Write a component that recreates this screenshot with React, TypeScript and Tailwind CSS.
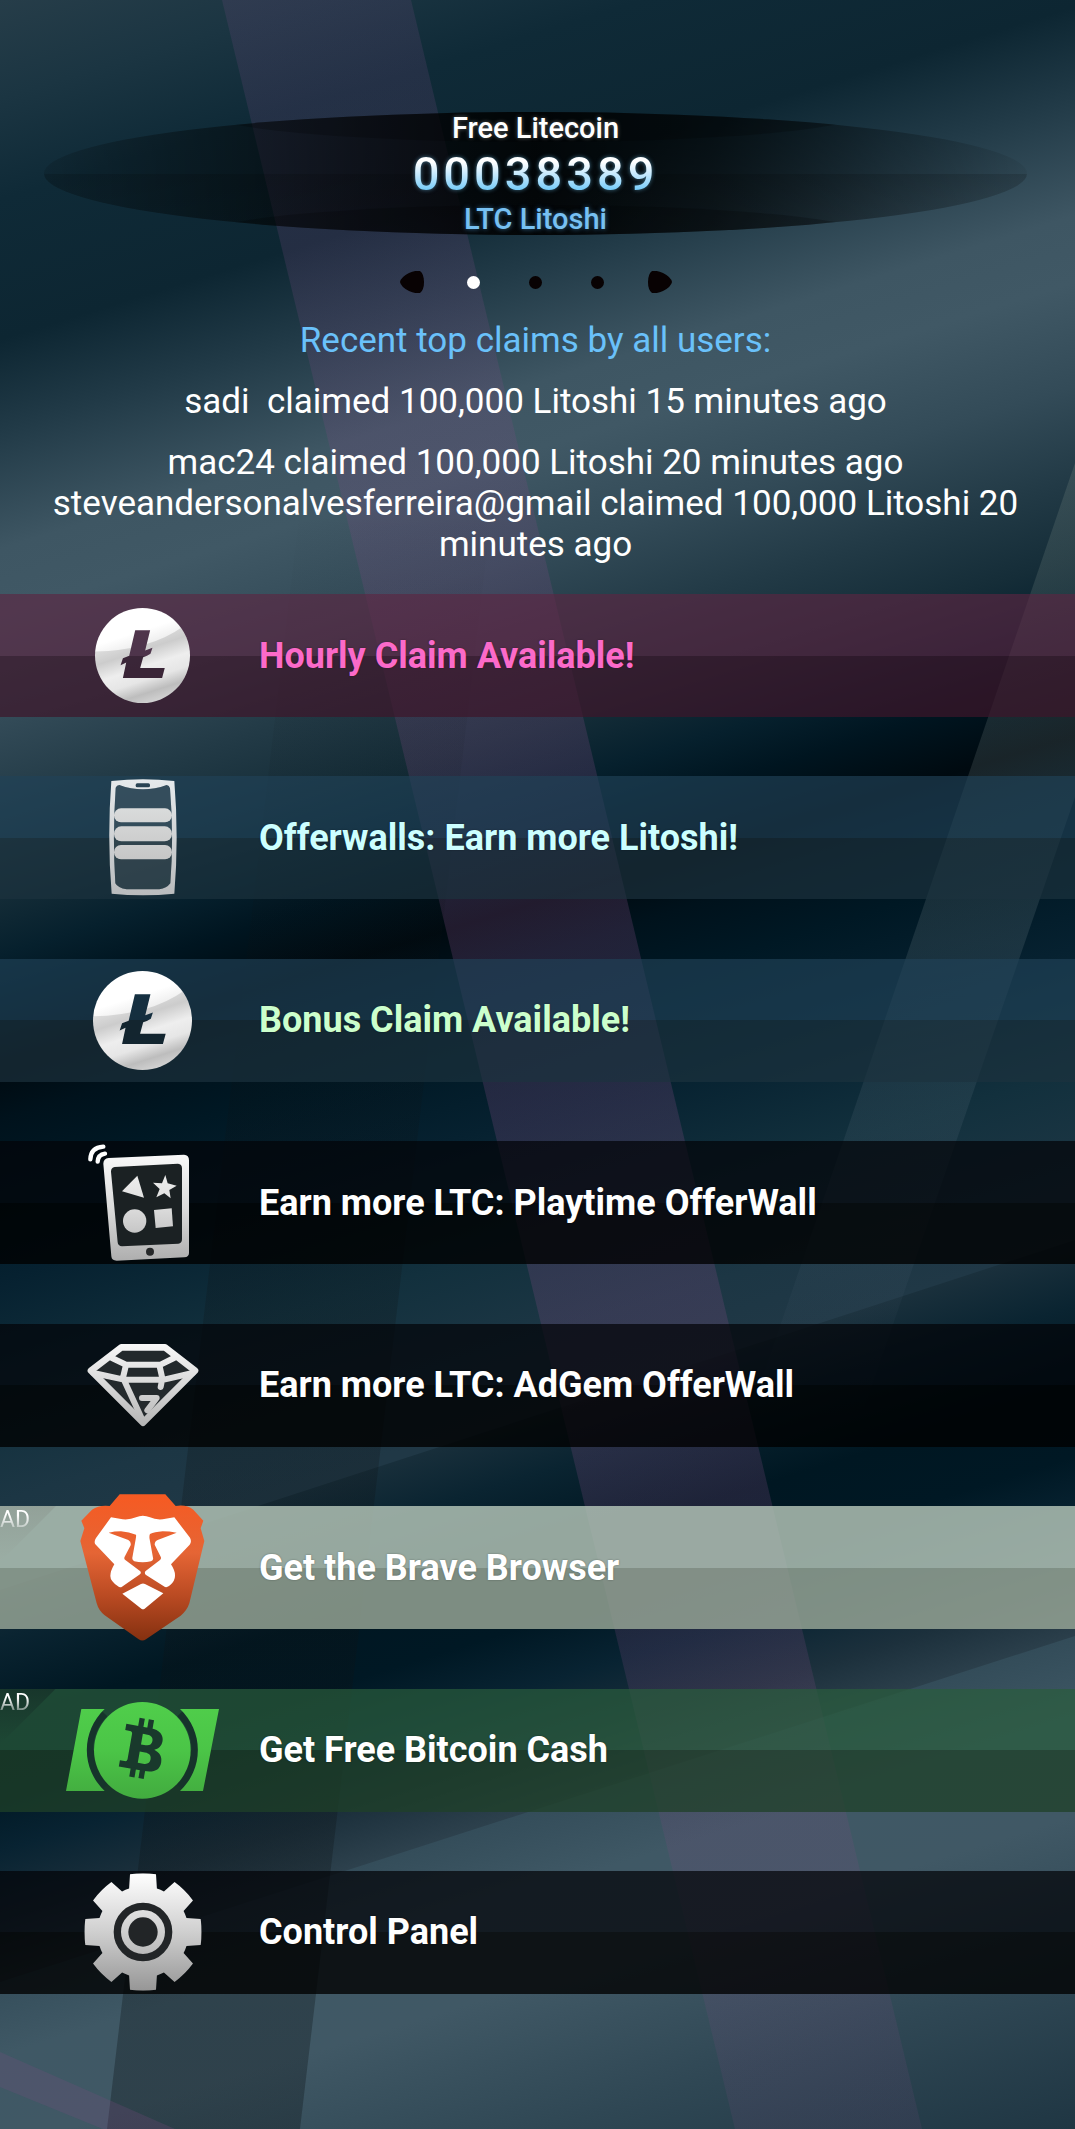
import React from "react";

function Backdrop() {
  return (
    <svg
      className="absolute inset-0 h-full w-full"
      viewBox="0 0 1075 2129"
      preserveAspectRatio="none"
      aria-hidden="true"
    >
      <defs>
        <linearGradient id="sky" gradientUnits="userSpaceOnUse" x1="0" y1="0" x2="696" y2="2246">
          <stop offset="0" stopColor="#263d49" />
          <stop offset="0.04" stopColor="#1b3542" />
          <stop offset="0.081" stopColor="#0f2a37" />
          <stop offset="0.138" stopColor="#0d2632" />
          <stop offset="0.175" stopColor="#213a47" />
          <stop offset="0.223" stopColor="#3e5663" />
          <stop offset="0.25" stopColor="#405865" />
          <stop offset="0.292" stopColor="#334b58" />
          <stop offset="0.33" stopColor="#223a46" />
          <stop offset="0.362" stopColor="#152d38" />
          <stop offset="0.388" stopColor="#06202d" />
          <stop offset="0.408" stopColor="#001520" />
          <stop offset="0.434" stopColor="#000a10" />
          <stop offset="0.455" stopColor="#00121c" />
          <stop offset="0.48" stopColor="#001824" />
          <stop offset="0.52" stopColor="#062130" />
          <stop offset="0.57" stopColor="#12303d" />
          <stop offset="0.61" stopColor="#1c3644" />
          <stop offset="0.64" stopColor="#203846" />
        </linearGradient>
        <linearGradient id="mid" gradientUnits="userSpaceOnUse" x1="0" y1="0" x2="696" y2="2246">
          <stop offset="0.64" stopColor="#1a303c" />
          <stop offset="0.666" stopColor="#0a2431" />
          <stop offset="0.699" stopColor="#001722" />
          <stop offset="0.727" stopColor="#001824" />
          <stop offset="0.752" stopColor="#082332" />
          <stop offset="0.78" stopColor="#1c303c" />
          <stop offset="0.803" stopColor="#2d414d" />
        </linearGradient>
        <linearGradient id="low" gradientUnits="userSpaceOnUse" x1="0" y1="0" x2="696" y2="2246">
          <stop offset="0.8" stopColor="#334c59" />
          <stop offset="0.835" stopColor="#3f5865" />
          <stop offset="0.873" stopColor="#405865" />
          <stop offset="0.934" stopColor="#2f4754" />
          <stop offset="1" stopColor="#1f3643" />
        </linearGradient>
        <linearGradient id="violetFade" gradientUnits="userSpaceOnUse" x1="0" y1="0" x2="0" y2="2129">
          <stop offset="0" stopColor="#744a80" stopOpacity="0.2" />
          <stop offset="0.4" stopColor="#7d4a80" stopOpacity="0.27" />
          <stop offset="0.65" stopColor="#7d4a80" stopOpacity="0.26" />
          <stop offset="1" stopColor="#7d4a80" stopOpacity="0.14" />
        </linearGradient>
        <linearGradient id="beamFade" gradientUnits="userSpaceOnUse" x1="0" y1="463" x2="0" y2="1420">
          <stop offset="0" stopColor="#8a9a8f" stopOpacity="0.2" />
          <stop offset="0.5" stopColor="#8a9a9f" stopOpacity="0.17" />
          <stop offset="0.8" stopColor="#7a8a9f" stopOpacity="0.08" />
          <stop offset="1" stopColor="#7a8a9f" stopOpacity="0" />
        </linearGradient>
        <linearGradient id="shadeFade" gradientUnits="userSpaceOnUse" x1="0" y1="500" x2="0" y2="2129">
          <stop offset="0" stopColor="#0c1012" stopOpacity="0" />
          <stop offset="0.5" stopColor="#0c1012" stopOpacity="0.22" />
          <stop offset="1" stopColor="#0c1418" stopOpacity="0.34" />
        </linearGradient>
      </defs>
      <rect width="1075" height="2129" fill="url(#sky)" />
      <path d="M1075 1240L0 1590V2129H1075Z" fill="url(#mid)" />
      <path d="M1075 1636L0 1982V2129H1075Z" fill="url(#low)" />
      <path d="M222 0H411L922 2129H735Z" fill="url(#violetFade)" />
      <path d="M1075 463V797L860 1420H748Z" fill="url(#beamFade)" />
      <path d="M301 500H493L300 2129H107Z" fill="url(#shadeFade)" />
      <path d="M0 2052L175 2129H103L0 2087Z" fill="#7d4a80" fillOpacity="0.24" />
    </svg>
  );
}

function CoinIcon({ id, className }: { id: string; className: string }) {
  return (
    <svg className={className} viewBox="285 53 286 286" aria-hidden="true">
      <defs>
        <linearGradient id={id + "-body"} gradientUnits="userSpaceOnUse" x1="395" y1="150" x2="455" y2="335">
          <stop offset="0" stopColor="#dcdcdc" />
          <stop offset="0.2" stopColor="#cccccc" />
          <stop offset="0.45" stopColor="#eeeeee" />
          <stop offset="0.65" stopColor="#e6e6e6" />
          <stop offset="0.85" stopColor="#bdbdbd" />
          <stop offset="1" stopColor="#d0d0d0" />
        </linearGradient>
        <linearGradient id={id + "-shine"} gradientUnits="userSpaceOnUse" x1="400" y1="60" x2="440" y2="185">
          <stop offset="0.5" stopColor="#ffffff" />
          <stop offset="1" stopColor="#e6e6e6" />
        </linearGradient>
        <mask id={id + "-mask"}>
          <circle cx="428" cy="196" r="143" fill="#fff" />
          <path
            d="M406 120H451L436 181L458 173L452 191Q442 198 430 201L421 234H495L487 264H369L379 217L362 225L369 204L388 197Z"
            fill="#000"
          />
        </mask>
      </defs>
      <g mask={"url(#" + id + "-mask)"}>
        <rect x="285" y="53" width="286" height="286" fill={"url(#" + id + "-body)"} />
        <path d="M285 184Q450 180 548 110L571 53H285Z" fill={"url(#" + id + "-shine)"} />
      </g>
    </svg>
  );
}

function PhoneIcon() {
  return (
    <svg className="h-[117px] w-[68px] shrink-0" viewBox="327 569 204 351" aria-hidden="true">
      <defs>
        <linearGradient id="phone" x1="0" y1="0" x2="0" y2="1">
          <stop offset="0" stopColor="#e6eaec" />
          <stop offset="1" stopColor="#b9bbbd" />
        </linearGradient>
        <linearGradient id="phoneBars" gradientUnits="userSpaceOnUse" x1="0" y1="650" x2="0" y2="815">
          <stop offset="0" stopColor="#dadcdc" />
          <stop offset="1" stopColor="#c6c6c6" />
        </linearGradient>
      </defs>
      <path
        fillRule="evenodd"
        fill="url(#phone)"
        d="M334 575Q429 564 523 575Q537 745 523 913Q429 923 335 913Q321 745 334 575ZM347 595Q350 587 358 587Q429 613 500 587Q508 588 510 597Q522 740 511 882Q500 897 478 900H380Q353 896 346 882Q337 740 347 595Z"
      />
      <path
        fill="#8a8f92"
        fillOpacity="0.2"
        d="M347 595Q350 587 358 587Q429 613 500 587Q508 588 510 597Q522 740 511 882Q500 897 478 900H380Q353 896 346 882Q337 740 347 595Z"
      />
      <rect x="407" y="582" width="43" height="12" rx="5" fill="#2a4454" />
      <rect x="342" y="657" width="174" height="42" rx="21" fill="url(#phoneBars)" />
      <rect x="342" y="711" width="174" height="45" rx="22" fill="url(#phoneBars)" />
      <rect x="342" y="767" width="174" height="43" rx="21" fill="url(#phoneBars)" />
    </svg>
  );
}

function TabletIcon() {
  return (
    <svg className="h-[117px] w-[110px] shrink-0" viewBox="264 613 330 351" aria-hidden="true">
      <defs>
        <linearGradient id="tablet" gradientUnits="userSpaceOnUse" x1="0" y1="645" x2="0" y2="963">
          <stop offset="0" stopColor="#f8f8f8" />
          <stop offset="0.5" stopColor="#dcdcdc" />
          <stop offset="1" stopColor="#aeaeae" />
        </linearGradient>
      </defs>
      <path
        fill="url(#tablet)"
        d="M326 655L552 645Q567 646 567 662V940Q567 952 553 953L350 963Q335 963 334 950L310 672Q310 657 326 655Z"
      />
      <path
        fill="#1b2123"
        d="M344 682L534 672Q546 673 546 686V898Q546 911 535 912L366 920Q354 919 353 908L333 696Q333 684 344 682Z"
      />
      <g fill="url(#tablet)">
        <path d="M412 708L366 755L432 774Z" />
        <path d="M496 706L503 731L530 738L508 751L512 776L493 761L469 773L479 748L459 729L486 731Z" />
        <circle cx="404" cy="844" r="35" />
        <path d="M462 811L515 806L519 860L467 865Z" />
      </g>
      <circle cx="450" cy="936" r="12" fill="#262829" />
      <g fill="none" stroke="#fff" strokeWidth="13" strokeLinecap="round">
        <path d="M271 659Q272 624 310 621" />
        <path d="M293 666Q294 645 315 642" />
      </g>
    </svg>
  );
}

function DiamondIcon() {
  return (
    <svg className="h-[84px] w-[112px] shrink-0" viewBox="261 100 336 252" aria-hidden="true">
      <defs>
        <linearGradient id="gem" gradientUnits="userSpaceOnUse" x1="0" y1="103" x2="0" y2="350">
          <stop offset="0" stopColor="#f8f8f8" />
          <stop offset="0.5" stopColor="#d8d8d8" />
          <stop offset="1" stopColor="#b4b4b4" />
        </linearGradient>
      </defs>
      <g stroke="url(#gem)" strokeLinecap="round" strokeLinejoin="round" fill="none">
        <path d="M364 113H495L585 183L429 339L273 183Z" fill="#23292c" strokeWidth="20" />
        <path
          strokeWidth="18"
          d="M336 145L378 165H482L522 145M378 166L368 208M478 166L487 206L482 232M280 190L372 210H492L578 190M372 211L429 335M426 265H470L442 302"
        />
      </g>
    </svg>
  );
}

function LionIcon() {
  return (
    <svg className="h-[147px] w-[125px] shrink-0" viewBox="242 554 375 441" aria-hidden="true">
      <defs>
        <linearGradient id="lion" x1="0" y1="0" x2="0" y2="1">
          <stop offset="0" stopColor="#f65a22" />
          <stop offset="0.4" stopColor="#e56535" />
          <stop offset="0.7" stopColor="#b94a22" />
          <stop offset="1" stopColor="#843010" />
        </linearGradient>
      </defs>
      <path
        fill="url(#lion)"
        d="M361 555H498L529 590Q560 584 582 601L612 634L604 657L615 695L570 882Q563 904 544 919L440 990Q429 997 418 990L316 918Q298 904 292 882L243 695L255 657L246 634L278 601Q300 586 331 590Z"
      />
      <path
        fill="#fff"
        d="M335 624L370 630Q392 632 410 624Q430 614 452 624Q468 632 490 630L525 624L572 685Q578 697 571 706L515 765Q528 785 527 800Q527 815 512 828Q505 835 497 833L439 796Q434 790 439 785L482 752Q487 748 484 742L466 706Q466 696 475 692L532 670Q510 666 490 666Q465 668 452 674Q449 680 451 690L461 745Q463 753 455 756Q430 762 405 756Q398 753 399 745L409 690Q411 680 410 676Q390 668 365 666Q345 666 328 670L387 692Q396 697 394 708L376 742Q373 749 378 752L422 785Q427 790 422 795L368 832Q362 836 355 830Q333 815 333 800Q333 785 345 765L288 705Q283 697 290 686Z"
      />
      <path fill="#fff" d="M369 853L425 824Q431 821 437 824L492 852L436 898Q431 902 426 898Z" />
    </svg>
  );
}

function CashIcon() {
  return (
    <svg className="h-[97px] w-[153px] shrink-0" viewBox="200 126 459 291" aria-hidden="true">
      <defs>
        <linearGradient id="cash" gradientUnits="userSpaceOnUse" x1="0" y1="126" x2="0" y2="416">
          <stop offset="0" stopColor="#50ce4b" />
          <stop offset="0.5" stopColor="#4bc547" />
          <stop offset="1" stopColor="#42ab3f" />
        </linearGradient>
      </defs>
      <g fill="none" stroke="#16332b" strokeWidth="25">
        <path d="M315 160A157 157 0 0 0 315 382" />
        <path d="M543 160A157 157 0 0 1 543 382" />
      </g>
      <g fill="url(#cash)">
        <path d="M246 147H316A168 168 0 0 0 316 393H200Z" />
        <path d="M542 147H659L611 393H542A168 168 0 0 0 542 147Z" />
        <circle cx="429" cy="271" r="145" />
      </g>
      <g transform="translate(429 265) rotate(10)" fill="#19392c">
        <path
          fillRule="evenodd"
          d="M-60 -64H14C42 -64 56 -50 56 -32C56 -16 48 -7 36 -2C54 4 63 14 63 32C63 56 46 66 18 66H-60V47H-46Q-38 47 -38 40V-38Q-38 -45 -46 -45H-60ZM-6 -43V-11H8C20 -11 26 -17 26 -27C26 -37 20 -43 8 -43ZM-6 11V45H10C24 45 30 39 30 28C30 17 24 11 10 11Z"
        />
        <rect x="-24" y="-89" width="16" height="28" />
        <rect x="4" y="-89" width="16" height="28" />
        <rect x="-24" y="62" width="16" height="28" />
        <rect x="4" y="62" width="16" height="28" />
      </g>
    </svg>
  );
}

function GearIcon() {
  const tooth = "M-43 -110L-39 -173Q0 -179 39 -173L43 -110Z";
  return (
    <svg className="h-[118px] w-[118px] shrink-0" viewBox="-177 -177 354 354" aria-hidden="true">
      <defs>
        <linearGradient id="gear" x1="0" y1="0" x2="0" y2="1">
          <stop offset="0" stopColor="#ffffff" />
          <stop offset="0.5" stopColor="#cfcfcf" />
          <stop offset="1" stopColor="#969696" />
        </linearGradient>
        <clipPath id="gearShape">
          <circle r="137" />
          {[0, 45, 90, 135, 180, 225, 270, 315].map((a) => (
            <path key={a} d={tooth} transform={`rotate(${a})`} />
          ))}
        </clipPath>
      </defs>
      <rect x="-177" y="-177" width="354" height="354" fill="url(#gear)" clipPath="url(#gearShape)" />
      <circle r="77" fill="none" stroke="#222527" strokeWidth="22" />
      <circle r="44" fill="#222527" />
    </svg>
  );
}

type Item = {
  title: string;
  text: string;
  top: string;
  bottom: string;
  icon: React.ReactNode;
  ad?: "light" | "dark";
};

const blueTop = "bg-[rgba(33,66,88,0.65)]";
const blueBottom = "bg-[rgba(28,50,62,0.68)]";
const blackTop = "bg-[rgba(3,4,8,0.72)]";
const blackBottom = "bg-[rgba(0,0,0,0.78)]";

const items: Item[] = [
  {
    title: "Hourly Claim Available!",
    text: "text-[#fb6ac9]",
    top: "bg-[rgba(93,38,66,0.64)]",
    bottom: "bg-[rgba(61,22,42,0.7)]",
    icon: <CoinIcon id="coinA" className="size-[95px] shrink-0" />,
  },
  {
    title: "Offerwalls: Earn more Litoshi!",
    text: "text-[#ccffff]",
    top: blueTop,
    bottom: blueBottom,
    icon: <PhoneIcon />,
  },
  {
    title: "Bonus Claim Available!",
    text: "text-[#ccffcc]",
    top: blueTop,
    bottom: blueBottom,
    icon: <CoinIcon id="coinB" className="size-[99px] shrink-0" />,
  },
  {
    title: "Earn more LTC: Playtime OfferWall",
    text: "text-white",
    top: blackTop,
    bottom: blackBottom,
    icon: <TabletIcon />,
  },
  {
    title: "Earn more LTC: AdGem OfferWall",
    text: "text-white",
    top: blackTop,
    bottom: blackBottom,
    icon: <DiamondIcon />,
  },
  {
    title: "Get the Brave Browser",
    text: "text-white",
    top: "bg-[rgba(182,199,186,0.82)]",
    bottom: "bg-[rgba(152,167,151,0.82)]",
    icon: <LionIcon />,
    ad: "light",
  },
  {
    title: "Get Free Bitcoin Cash",
    text: "text-white",
    top: "bg-[rgba(42,92,60,0.7)]",
    bottom: "bg-[rgba(31,64,40,0.75)]",
    icon: <CashIcon />,
    ad: "dark",
  },
  {
    title: "Control Panel",
    text: "text-white",
    top: blackTop,
    bottom: blackBottom,
    icon: <GearIcon />,
  },
];

function AdRibbon({ tone }: { tone: "light" | "dark" }) {
  return (
    <span
      className={
        "absolute left-0 top-0 size-14 pt-0.5 [clip-path:polygon(0_0,100%_0,0_100%)] bg-linear-to-b " +
        (tone === "light" ? "from-[#8f9c94]/70 to-[#9fb0a6]/20" : "from-[#17342a]/90 to-[#1f4a37]/20")
      }
    >
      <span className="block bg-linear-to-b from-white from-30% to-white/30 to-90% bg-clip-text text-left text-[23px] leading-6 text-transparent">
        AD
      </span>
    </span>
  );
}

function MenuRow({ item }: { item: Item }) {
  return (
    <li>
      <button type="button" className="relative flex h-[123px] w-full items-center text-left">
        <span className="absolute inset-0 flex flex-col" aria-hidden="true">
          <span className={"flex-1 " + item.top} />
          <span className={"flex-1 " + item.bottom} />
        </span>
        {item.ad && <AdRibbon tone={item.ad} />}
        <span className="relative flex w-[259px] shrink-0 items-center justify-center pl-[26px]">{item.icon}</span>
        <span
          className={
            "relative text-[36px] font-bold leading-[42px] [text-shadow:0_0_2px_rgba(0,0,0,0.35)] " + item.text
          }
        >
          {item.title}
        </span>
      </button>
    </li>
  );
}

function Arrow({ flip }: { flip?: boolean }) {
  return (
    <svg className={"h-[22px] w-6" + (flip ? " -scale-x-100" : "")} viewBox="0 0 24 22" aria-hidden="true">
      <path d="M0 11Q1 6 9 2Q16 -1 20 0Q24 3 24 11Q24 19 20 22Q16 23 9 20Q1 16 0 11Z" fill="#080203" />
    </svg>
  );
}

export default function App() {
  return (
    <main className="relative flex min-h-screen flex-col overflow-hidden bg-[#0c2430] pb-[135px] font-['Roboto',sans-serif] text-white">
      <Backdrop />
      <header className="relative flex flex-col pl-11 pr-12 pt-28 text-center">
        <div className="relative flex h-[123px] flex-col items-center">
          <div
            className="absolute inset-0 overflow-hidden rounded-[50%] bg-[linear-gradient(90deg,rgba(0,0,0,0.12)_0%,rgba(0,0,0,0.38)_16%,rgba(0,0,0,0.62)_32%,rgba(0,0,0,0.84)_50%,rgba(0,0,0,0.62)_68%,rgba(0,0,0,0.26)_86%,rgba(0,0,0,0.05)_100%)]"
            aria-hidden="true"
          >
            <span className="absolute inset-x-0 bottom-0 h-1/2 bg-linear-to-b from-black/15 to-black/5" />
            <span className="absolute inset-x-[16%] -top-8 h-[62px] rounded-[50%] bg-black/20" />
            <span className="absolute inset-x-[16%] -bottom-8 h-[62px] rounded-[50%] bg-black/20" />
          </div>
          <h1 className="relative text-[29px] font-medium leading-8 [text-shadow:0_0_4px_rgba(255,255,255,0.35)]">
            Free Litecoin
          </h1>
          <p className="relative bg-linear-to-b from-white from-30% to-[#5cc4f8] to-85% bg-clip-text text-[47px] font-medium leading-[59px] tracking-[4px] text-transparent drop-shadow-[0_0_2px_rgba(120,210,255,0.5)]">
            00038389
          </p>
          <p className="relative text-[29px] font-medium leading-8 text-[#77c0f2] [text-shadow:0_0_5px_rgba(80,170,240,0.6)]">
            LTC Litoshi
          </p>
        </div>
        <nav className="mt-[23px] flex h-12 items-center justify-center" aria-label="Pages">
          <button type="button" aria-label="Previous" className="flex h-12 w-[62px] items-center justify-center">
            <Arrow />
          </button>
          <button type="button" aria-label="Page 1" className="flex h-12 w-[62px] items-center justify-center">
            <span className="size-[13px] rounded-full bg-white" />
          </button>
          <button type="button" aria-label="Page 2" className="flex h-12 w-[62px] items-center justify-center">
            <span className="size-[13px] rounded-full bg-[#080203]" />
          </button>
          <button type="button" aria-label="Page 3" className="flex h-12 w-[62px] items-center justify-center">
            <span className="size-[13px] rounded-full bg-[#080203]" />
          </button>
          <button type="button" aria-label="Next" className="flex h-12 w-[62px] items-center justify-center">
            <Arrow flip />
          </button>
        </nav>
        <div className="mt-[14px] text-[35px] leading-[41px]">
          <h2 className="text-[#6ac1fa]">Recent top claims by all users:</h2>
          <p className="mt-5 whitespace-pre-wrap">sadi  claimed 100,000 Litoshi 15 minutes ago</p>
          <p className="mt-5">mac24 claimed 100,000 Litoshi 20 minutes ago</p>
          <p>steveandersonalvesferreira@gmail claimed 100,000 Litoshi 20 minutes ago</p>
        </div>
      </header>
      <ul className="relative mt-[29px] flex flex-1 flex-col justify-between gap-6">
        {items.map((item) => (
          <MenuRow key={item.title} item={item} />
        ))}
      </ul>
    </main>
  );
}
